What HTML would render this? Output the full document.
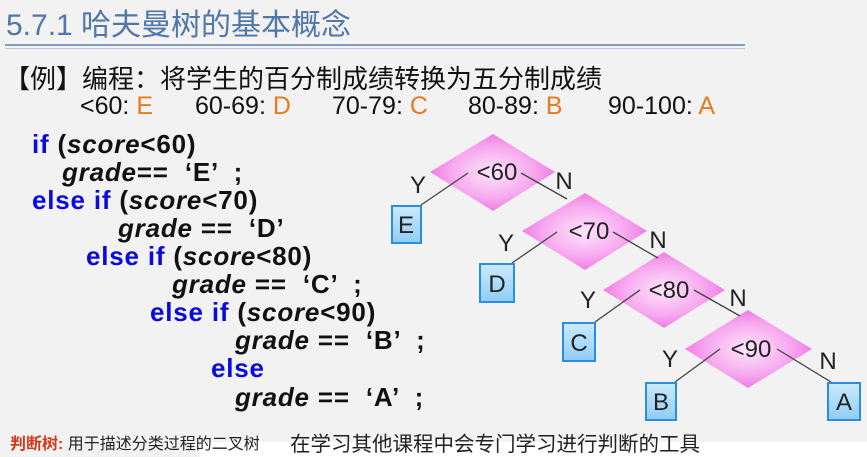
<!DOCTYPE html>
<html><head><meta charset="utf-8"><style>
body{margin:0;width:867px;height:457px;background:#f2f2f2;position:relative;overflow:hidden;font-family:"Liberation Sans","Noto Sans CJK SC",sans-serif;}
.a{position:absolute;white-space:nowrap;}
.c{font-size:26px;font-weight:bold;color:#111;letter-spacing:0.8px;line-height:28px;}
.k{color:#0a0adc;}
i{font-style:italic;}
.o{color:#e87a1e;}
.r{font-size:25px;color:#111;top:92px;}
</style></head><body>
<div class="a" style="left:6px;top:0px;font-size:30px;color:#4f77a8;">5.7.1 哈夫曼树的基本概念</div>
<div class="a" style="left:5px;top:44px;width:740px;height:2px;background:#7d9cc6;"></div>
<div class="a" style="left:5px;top:48px;width:740px;height:1px;background:#b8c8e0;"></div>
<div class="a" style="left:4px;top:59px;font-size:26px;color:#111;">【例】编程：将学生的百分制成绩转换为五分制成绩</div>
<div class="a r" style="left:80px;">&lt;60: <span class="o">E</span></div>
<div class="a r" style="left:195px;">60-69: <span class="o">D</span></div>
<div class="a r" style="left:332px;">70-79: <span class="o">C</span></div>
<div class="a r" style="left:468px;">80-89: <span class="o">B</span></div>
<div class="a r" style="left:608px;">90-100: <span class="o">A</span></div>

<div class="a c" style="left:32px;top:130px;"><span class="k">if</span> (<i>score</i>&lt;60)</div>
<div class="a c" style="left:62px;top:158px;"><i>grade</i>== &nbsp;‘E’ &nbsp;;</div>
<div class="a c" style="left:32px;top:186px;"><span class="k">else if</span> (<i>score</i>&lt;70)</div>
<div class="a c" style="left:118px;top:214px;"><i>grade</i> == &nbsp;‘D’</div>
<div class="a c" style="left:86px;top:242px;"><span class="k">else if</span> (<i>score</i>&lt;80)</div>
<div class="a c" style="left:172px;top:270px;"><i>grade</i> == &nbsp;‘C’ &nbsp;;</div>
<div class="a c" style="left:150px;top:298px;"><span class="k">else if</span> (<i>score</i>&lt;90)</div>
<div class="a c" style="left:235px;top:326px;"><i>grade</i> == &nbsp;‘B’ &nbsp;;</div>
<div class="a c" style="left:211px;top:354px;"><span class="k">else</span></div>
<div class="a c" style="left:235px;top:383px;"><i>grade</i> == &nbsp;‘A’ &nbsp;;</div>

<svg class="a" style="left:0;top:0" width="867" height="457">
<defs><radialGradient id="g" cx="50%" cy="50%" r="55%"><stop offset="0" stop-color="#fde6fb"/><stop offset="0.6" stop-color="#f7a9ef"/><stop offset="1" stop-color="#ee6fe0"/></radialGradient>
<linearGradient id="b" x1="0" y1="0" x2="0" y2="1"><stop offset="0" stop-color="#cdeafd"/><stop offset="1" stop-color="#8fcdf6"/></linearGradient></defs>
<g fill="url(#g)">
<polygon points="493,134 555,172 493,211 430,172"/>
<polygon points="585,193 647,231 585,270 522,231"/>
<polygon points="664,252 725,290 664,328 603,290"/>
<polygon points="748,310 812,349 748,388 685,349"/>
</g>
<g stroke="#444" stroke-width="1.3" fill="none">
<line x1="421" y1="205" x2="468" y2="173"/><line x1="521" y1="173" x2="567" y2="199"/>
<line x1="512" y1="263" x2="557" y2="232"/><line x1="613" y1="232" x2="658" y2="258"/>
<line x1="595" y1="322" x2="640" y2="290"/><line x1="694" y1="290" x2="740" y2="316"/>
<line x1="675" y1="382" x2="720" y2="349"/><line x1="777" y1="349" x2="831" y2="382"/>
</g>
<g fill="url(#b)" stroke="#2a8ee0" stroke-width="2">
<rect x="392" y="206" width="29" height="37"/><rect x="480" y="264" width="34" height="38"/>
<rect x="563" y="323" width="32" height="38"/><rect x="646" y="383" width="30" height="37"/>
<rect x="828" y="383" width="32" height="37"/>
</g>
<g font-family="Liberation Sans,sans-serif" font-size="24" fill="#222" text-anchor="middle">
<text x="497" y="180">&lt;60</text><text x="589" y="239">&lt;70</text><text x="669" y="298">&lt;80</text><text x="751" y="357">&lt;90</text>
<text x="418" y="193">Y</text><text x="564" y="189">N</text>
<text x="506" y="251">Y</text><text x="658" y="248">N</text>
<text x="588" y="308">Y</text><text x="738" y="306">N</text>
<text x="670" y="367">Y</text><text x="828" y="369">N</text>
<text x="406" y="233">E</text><text x="497" y="292">D</text><text x="579" y="351">C</text><text x="661" y="410">B</text><text x="844" y="410">A</text>
</g>
</svg>
<div class="a" style="left:200px;top:442px;width:667px;height:15px;background:#fff;"></div>
<div class="a" style="left:10px;top:430px;font-size:16px;color:#222;"><span style="color:#d03a1a;font-weight:bold;">判断树:</span> 用于描述分类过程的二叉树</div>
<div class="a" style="left:290px;top:427px;font-size:20.5px;color:#222;">在学习其他课程中会专门学习进行判断的工具</div>
</body></html>
